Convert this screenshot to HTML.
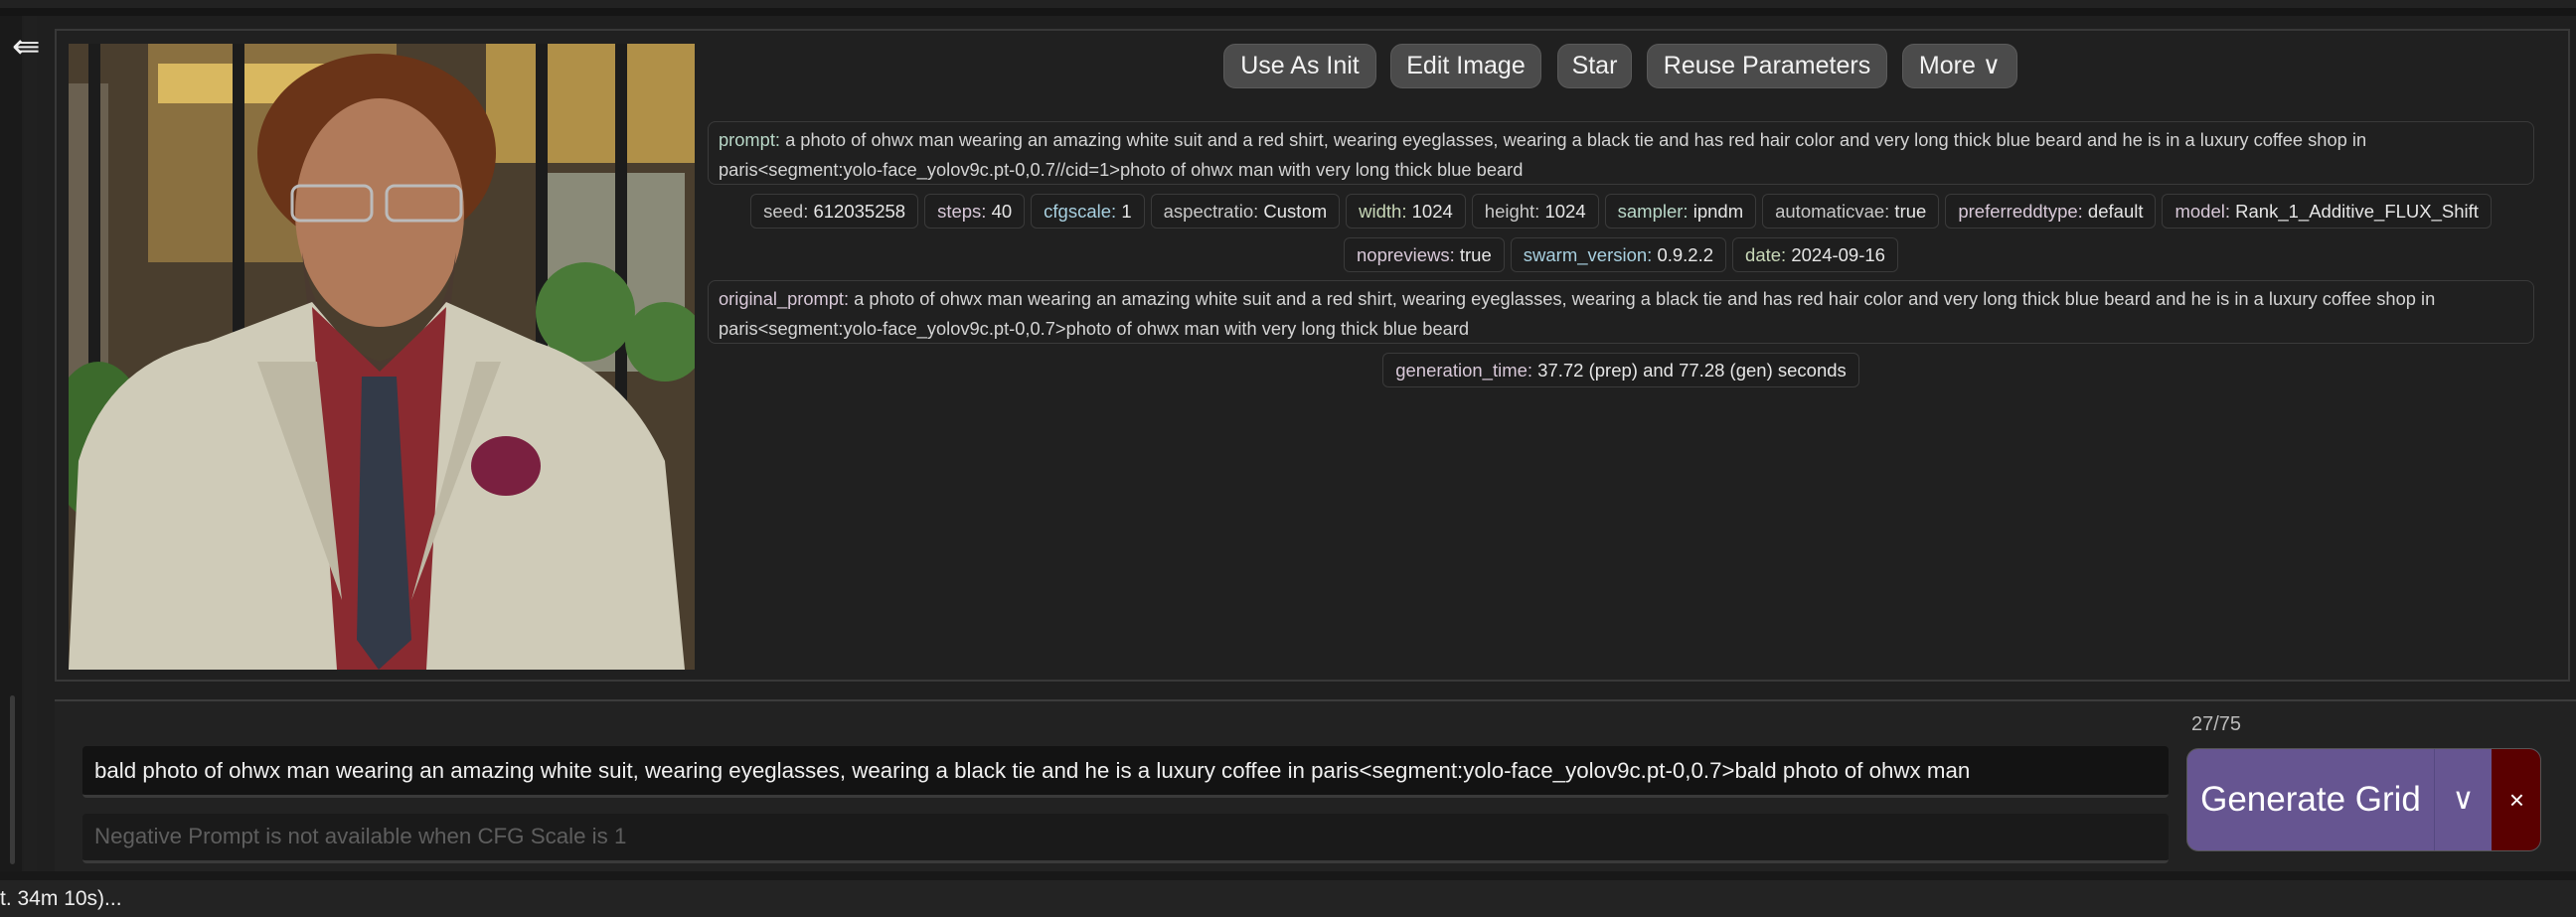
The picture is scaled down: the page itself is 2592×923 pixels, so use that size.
<!DOCTYPE html>
<html><head><meta charset="utf-8"><style>
*{box-sizing:border-box;margin:0;padding:0}
body{width:2592px;height:923px;background:#1f1f1f;font-family:"Liberation Sans",sans-serif;position:relative;overflow:hidden;color:#ddd}
.abs{position:absolute}
.btn{position:absolute;top:44px;height:45px;background:#4b4b4b;border:1px solid #5a5a5a;border-radius:12px;color:#f2f2f2;font-size:25px;line-height:43px;text-align:center}
.box{position:absolute;left:712px;width:1838px;border:1px solid #3a3a3a;border-radius:8px;background:#202020;font-size:18.3px;line-height:30px;padding:3px 10px;color:#d4d4d4;white-space:nowrap}
.row{position:absolute;left:712px;width:1838px;display:flex;justify-content:center;gap:6px}
.chip{height:35px;border:1px solid #3a3a3a;border-radius:6px;background:#1e1e1e;font-size:18.5px;line-height:33px;padding:0 12px;color:#e6e6e6;white-space:nowrap}
.k1{color:#b9d8c8}.k2{color:#c8c8c8}.k3{color:#a8d0e0}.k4{color:#d8c8d8}.k5{color:#c8d8b8}
.ta{position:absolute;left:83px;width:2099px;background:#131313;border-radius:4px;border-bottom:3px solid #3a3a3a;font-size:22.3px;padding:0 12px;white-space:nowrap}
</style></head><body>
<div class="abs" style="left:0;top:0;width:2592px;height:8px;background:#222"></div>
<div class="abs" style="left:0;top:8px;width:2592px;height:8px;background:#151515"></div>
<div class="abs" style="left:0;top:16px;width:22px;height:861px;background:#1a1a1a"></div>
<div class="abs" style="left:24px;top:16px;width:13px;height:861px;background:#202020"></div>
<div class="abs" style="left:10px;top:700px;width:5px;height:170px;background:#3a3a3a;border-radius:3px"></div>
<div class="abs" style="left:12px;top:30px;font-size:34px;color:#eee;line-height:34px">&#8666;</div>
<div class="abs" style="left:55px;top:29px;width:2531px;height:657px;border:2px solid #383838;background:#202020"></div>
<svg class="abs" style="left:69px;top:44px" width="630" height="630" viewBox="0 0 630 630">
<rect width="630" height="630" fill="#4a3e2e"/>
<rect x="80" y="0" width="250" height="220" fill="#8a7040"/>
<rect x="90" y="20" width="220" height="40" fill="#d9b860"/>
<rect x="420" y="0" width="210" height="120" fill="#b09048"/>
<rect x="480" y="130" width="140" height="200" fill="#8a8a78"/>
<rect x="0" y="40" width="40" height="300" fill="#6a6050"/>
<rect x="165" y="0" width="12" height="290" fill="#1c1c1c"/>
<rect x="20" y="0" width="12" height="330" fill="#1c1c1c"/>
<rect x="470" y="0" width="12" height="420" fill="#1c1c1c"/>
<rect x="550" y="0" width="12" height="480" fill="#1c1c1c"/>
<ellipse cx="30" cy="400" rx="50" ry="80" fill="#3c6a2c"/>
<ellipse cx="520" cy="270" rx="50" ry="50" fill="#4a7a38"/>
<ellipse cx="600" cy="300" rx="40" ry="40" fill="#4a7a38"/>
<ellipse cx="310" cy="110" rx="120" ry="100" fill="#6a3418"/>
<ellipse cx="313" cy="170" rx="85" ry="115" fill="#b07a5a"/>
<path d="M235 210 Q250 300 313 320 Q376 300 390 210 L385 260 Q360 320 313 330 Q266 320 240 260Z" fill="#4a3a30"/>
<rect x="225" y="143" width="80" height="35" rx="8" fill="none" stroke="#bbb" stroke-width="3"/>
<rect x="320" y="143" width="75" height="35" rx="8" fill="none" stroke="#bbb" stroke-width="3"/>
<path d="M0 630 L10 420 Q40 320 140 300 L245 260 L313 340 L380 260 L470 300 Q560 330 600 420 L620 630Z" fill="#cfcbb8"/>
<path d="M245 265 L270 630 L360 630 L380 265 L313 330Z" fill="#8a2a30"/>
<path d="M295 335 L330 335 L345 600 L312 630 L290 600Z" fill="#333a48"/>
<path d="M190 320 L275 560 L250 320Z" fill="#bdb8a4"/>
<path d="M435 320 L345 560 L410 320Z" fill="#bdb8a4"/>
<ellipse cx="440" cy="425" rx="35" ry="30" fill="#7a2040"/>
</svg>
<div class="btn" style="left:1231px;width:154px">Use As Init</div>
<div class="btn" style="left:1399px;width:152px">Edit Image</div>
<div class="btn" style="left:1567px;width:75px">Star</div>
<div class="btn" style="left:1657px;width:242px">Reuse Parameters</div>
<div class="btn" style="left:1914px;width:116px">More &#8744;</div>
<div class="box" style="top:122px;height:64px"><span class="k1">prompt:</span> a photo of ohwx man wearing an amazing white suit and a red shirt, wearing eyeglasses, wearing a black tie and has red hair color and very long thick blue beard and he is in a luxury coffee shop in<br>paris&lt;segment:yolo-face_yolov9c.pt-0,0.7//cid=1&gt;photo of ohwx man with very long thick blue beard</div>
<div class="row" style="top:195px">
<div class="chip"><span class="k2">seed:</span> 612035258</div><div class="chip"><span class="k4">steps:</span> 40</div><div class="chip"><span class="k3">cfgscale:</span> 1</div><div class="chip"><span class="k2">aspectratio:</span> Custom</div><div class="chip"><span class="k5">width:</span> 1024</div><div class="chip"><span class="k2">height:</span> 1024</div><div class="chip"><span class="k1">sampler:</span> ipndm</div><div class="chip"><span class="k2">automaticvae:</span> true</div><div class="chip"><span class="k4">preferreddtype:</span> default</div><div class="chip"><span class="k4">model:</span> Rank_1_Additive_FLUX_Shift</div>
</div>
<div class="row" style="top:239px">
<div class="chip"><span class="k4">nopreviews:</span> true</div><div class="chip"><span class="k3">swarm_version:</span> 0.9.2.2</div><div class="chip"><span class="k5">date:</span> 2024-09-16</div>
</div>
<div class="box" style="top:282px;height:64px"><span class="k4">original_prompt:</span> a photo of ohwx man wearing an amazing white suit and a red shirt, wearing eyeglasses, wearing a black tie and has red hair color and very long thick blue beard and he is in a luxury coffee shop in<br>paris&lt;segment:yolo-face_yolov9c.pt-0,0.7&gt;photo of ohwx man with very long thick blue beard</div>
<div class="row" style="top:355px"><div class="chip"><span class="k4">generation_time:</span> 37.72 (prep) and 77.28 (gen) seconds</div></div>
<div class="abs" style="left:55px;top:704px;width:2537px;height:173px;border-top:2px solid #3c3c3c;background:#222"></div>
<div class="abs" style="left:2205px;top:718px;font-size:20px;color:#bbb">27/75</div>
<div class="ta" style="top:751px;height:52px;line-height:50px;color:#f0f0f0">bald photo of ohwx man wearing an amazing white suit, wearing eyeglasses, wearing a black tie and he is a luxury coffee in paris&lt;segment:yolo-face_yolov9c.pt-0,0.7&gt;bald photo of ohwx man</div>
<div class="ta" style="top:819px;height:50px;line-height:46px;color:#5e5e5e;background:#1a1a1a">Negative Prompt is not available when CFG Scale is 1</div>
<div class="abs" style="left:2200px;top:753px;width:357px;height:104px;background:#665591;border-radius:12px;overflow:hidden;border:1px solid #555">
<div class="abs" style="left:0;top:0;width:248px;height:104px;color:#fff;font-size:35px;line-height:102px;text-align:center">Generate Grid</div>
<div class="abs" style="left:248px;top:0;width:1px;height:104px;background:#554880"></div>
<div class="abs" style="left:249px;top:0;width:57px;height:104px;color:#fff;font-size:30px;line-height:102px;text-align:center">&#8744;</div>
<div class="abs" style="left:306px;top:0;width:51px;height:104px;background:#5a0000;color:#fff;font-size:26px;line-height:102px;text-align:center">×</div>
</div>
<div class="abs" style="left:0;top:877px;width:2592px;height:9px;background:#181818"></div>
<div class="abs" style="left:0;top:886px;width:2592px;height:37px;background:#232323;font-size:21px;line-height:37px;color:#eee;padding-left:0">t. 34m 10s)...</div>
</body></html>
